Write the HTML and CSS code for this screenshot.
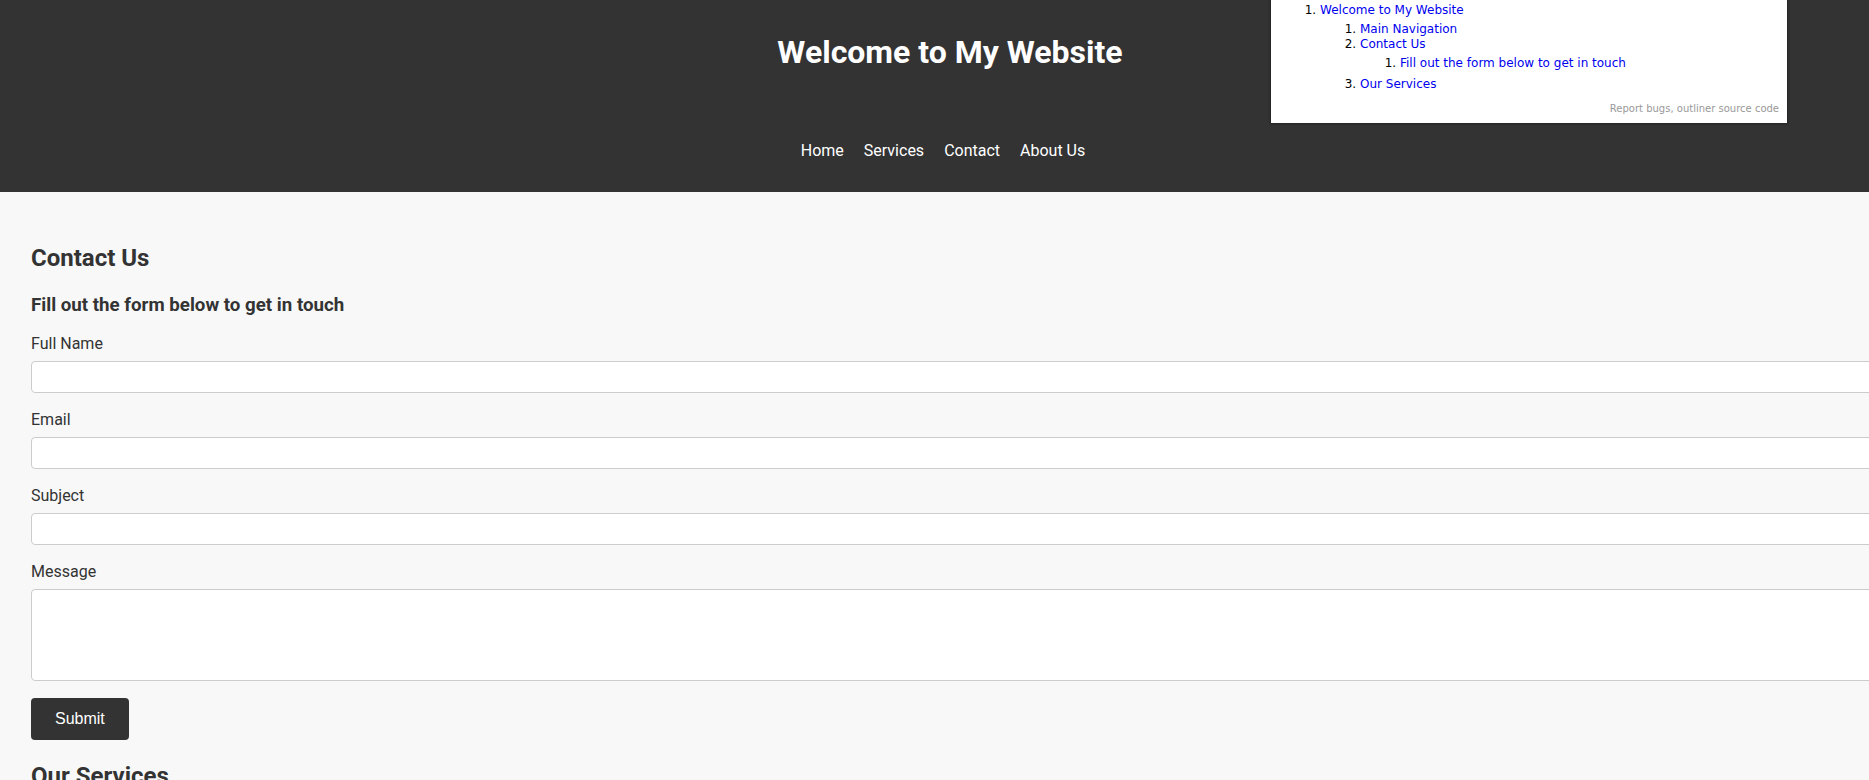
FILE: index.html
```html
<!DOCTYPE html>
<html lang="en">
<head>
<meta charset="utf-8">
<title>Welcome to My Website</title>
<link rel="stylesheet" href="styles.css">
</head>
<body>
<header class="site-header">
  <h1 class="site-title">Welcome to My Website</h1>
  <nav class="main-nav">
    <a href="#" class="nav-link">Home</a>
    <a href="#" class="nav-link">Services</a>
    <a href="#" class="nav-link">Contact</a>
    <a href="#" class="nav-link">About Us</a>
  </nav>
</header>
<main class="content">
  <section class="contact">
    <h2 class="section-title">Contact Us</h2>
    <h3 class="section-sub">Fill out the form below to get in touch</h3>
    <form class="contact-form">
      <div class="field">
        <label class="field-label" for="name">Full Name</label>
        <input class="field-input" id="name" type="text">
      </div>
      <div class="field">
        <label class="field-label" for="email">Email</label>
        <input class="field-input" id="email" type="email">
      </div>
      <div class="field">
        <label class="field-label" for="subject">Subject</label>
        <input class="field-input" id="subject" type="text">
      </div>
      <div class="field">
        <label class="field-label" for="message">Message</label>
        <textarea class="field-input field-area" id="message"></textarea>
      </div>
      <button class="submit-btn" type="submit">Submit</button>
    </form>
  </section>
  <section class="services">
    <h2 class="section-title services-title">Our Services</h2>
  </section>
</main>
<aside class="outliner">
  <ol class="ol-1">
    <li><a href="#">Welcome to My Website</a>
      <ol class="ol-n">
        <li><a href="#">Main Navigation</a></li>
        <li><a href="#">Contact Us</a>
          <ol class="ol-n ol-3">
            <li><a href="#">Fill out the form below to get in touch</a></li>
          </ol>
        </li>
        <li><a href="#">Our Services</a></li>
      </ol>
    </li>
  </ol>
  <div class="outliner-foot"><a href="#">Report bugs</a>, <a href="#">outliner source code</a></div>
</aside>
</body>
</html>
```
FILE: styles.css
```css
html, body {
  margin: 0;
  padding: 0;
  overflow-x: hidden;
}
body {
  font-family: Roboto, "Liberation Sans", sans-serif;
  font-size: 16px;
  color: #333;
  background: #f8f8f8;
  position: relative;
  min-height: 780px;
}
.site-header {
  background: #333;
  color: #fff;
  padding: 33px 0 32px 31px;
  text-align: center;
}
.site-title {
  margin: 0;
  font-size: 32px;
  line-height: 38px;
  font-weight: 700;
}
.main-nav {
  margin-top: 70px;
  padding-right: 14px;
  display: flex;
  justify-content: center;
  gap: 20px;
  line-height: 19px;
}
.nav-link {
  color: #fff;
  text-decoration: none;
}
.content {
  padding: 52px 0 0 31px;
  overflow: hidden;
}
.section-title {
  margin: 0;
  font-size: 24px;
  line-height: 28px;
  font-weight: 700;
}
.section-sub {
  margin: 22px 0 18px;
  font-size: 18.72px;
  line-height: 22px;
  font-weight: 700;
}
.field {
  margin-bottom: 17px;
}
.field-label {
  display: block;
  line-height: 19px;
  margin-bottom: 8px;
}
.field-input {
  display: block;
  box-sizing: border-box;
  width: calc(100% + 40px);
  height: 32px;
  border: 1px solid #ccc;
  border-radius: 4px;
  background: #fff;
  margin: 0;
  padding: 6px 8px;
  font: inherit;
}
.field-area {
  height: 92px;
  resize: vertical;
}
.submit-btn {
  display: block;
  background: #333;
  color: #fff;
  border: none;
  border-radius: 4px;
  padding: 12px 24px;
  font-family: "Liberation Sans", Arial, sans-serif;
  font-size: 16px;
  line-height: 18px;
  cursor: pointer;
}
.services-title {
  margin-top: 22px;
}
.outliner {
  position: absolute;
  top: 0;
  left: 1271px;
  width: 516px;
  height: 123px;
  box-sizing: border-box;
  padding: 3px 7px 0 9px;
  background: #fff;
  box-shadow: 0 0 2px 1px rgba(0, 0, 0, 0.35);
  font-family: "DejaVu Sans", Verdana, sans-serif;
  font-size: 12px;
  line-height: 15px;
  color: #000;
}
.outliner a {
  color: #0000ee;
  text-decoration: none;
}
.ol-1 {
  margin: 0;
  padding-left: 40px;
}
.ol-n {
  margin: 4px 0 0;
  padding-left: 40px;
}
.ol-3 {
  margin-bottom: 6px;
}
.outliner-foot {
  margin-top: 11px;
  padding-right: 1px;
  text-align: right;
  font-size: 10px;
  line-height: 12px;
  color: #999;
}
.outliner-foot a {
  color: #999;
}
```
